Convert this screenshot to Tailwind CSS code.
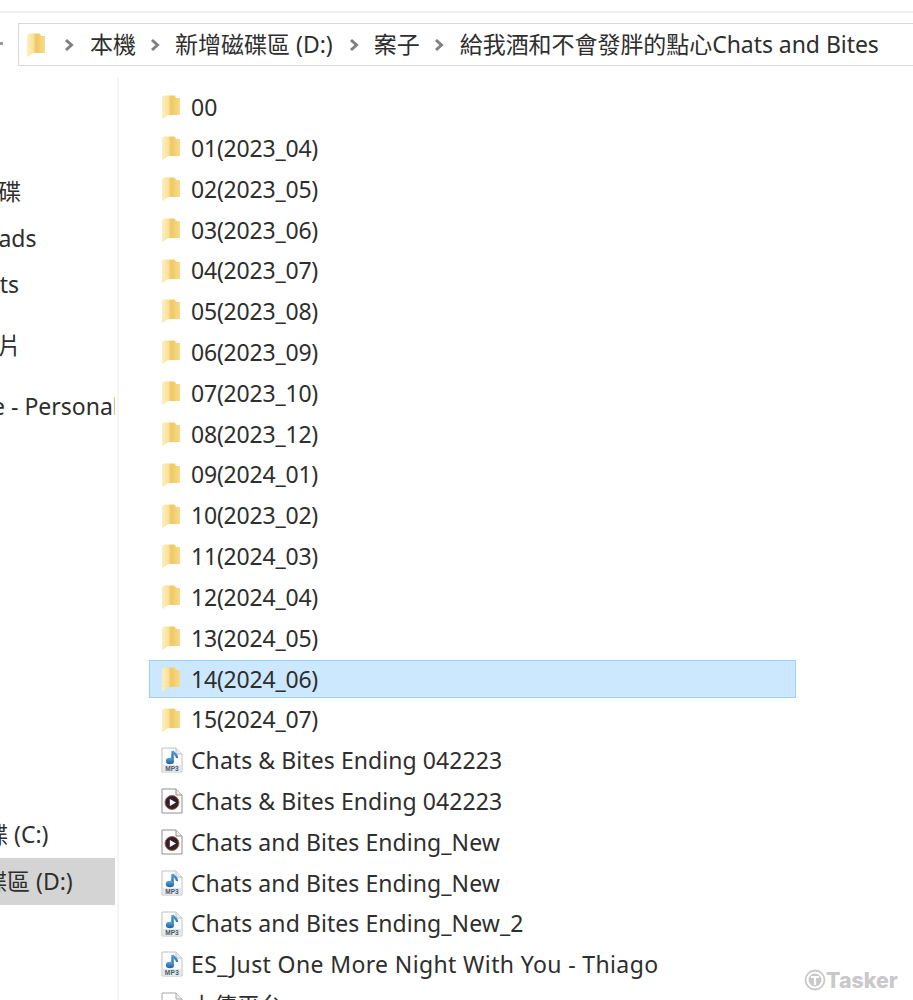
<!DOCTYPE html>
<html lang="zh-Hant">
<head>
<meta charset="UTF-8">
<title>Chats and Bites</title>
<script src="https://cdn.jsdelivr.net/npm/@tailwindcss/browser@4"></script>
</head>
<body class="bg-white h-[1000px] overflow-hidden relative font-['Noto_Sans','Noto_Sans_CJK_TC',sans-serif] text-[#2e2e2e] antialiased">

<svg class="absolute w-0 h-0">
  <defs>
    <linearGradient id="fg" x1="0" x2="1" y1="0" y2="0">
      <stop offset="0" stop-color="#fdf0bf"/>
      <stop offset="0.35" stop-color="#f9e29a"/>
      <stop offset="0.5" stop-color="#efc765"/>
      <stop offset="1" stop-color="#f8dc8a"/>
    </linearGradient>
    <linearGradient id="mg" x1="0" x2="0" y1="0" y2="1">
      <stop offset="0" stop-color="#56a6dd"/>
      <stop offset="1" stop-color="#1f5f9c"/>
    </linearGradient>
  </defs>
  <symbol id="folder" viewBox="0 0 20 26">
    <path d="M1 3 L3 1.5 L14 1.5 L15 4 L19 4 L19 21 L7 21 L2 25 L1 24 Z" fill="url(#fg)"/>
  </symbol>
  <symbol id="mp3" viewBox="0 0 22 26">
    <path d="M1 1 H15 L21 7 V25 H1 Z" fill="#fdfdfd" stroke="#c2c2c2"/>
    <path d="M15 1 V7 H21" fill="#ececec" stroke="#c2c2c2"/>
    <path d="M11.5 4 V13 M11.5 4 C13 7 16.5 7.5 16 11" fill="none" stroke="url(#mg)" stroke-width="2.4"/>
    <ellipse cx="9" cy="14" rx="4.2" ry="3.2" fill="url(#mg)"/>
    <rect x="2" y="18" width="18" height="6.5" fill="#e4e8ec"/>
    <text x="11" y="24" font-size="6.5" font-weight="700" text-anchor="middle" fill="#4c5a66" font-family="Liberation Sans">MP3</text>
  </symbol>
  <symbol id="video" viewBox="0 0 22 26">
    <path d="M1 1 H15 L21 7 V25 H1 Z" fill="#fff" stroke="#8f8f8f"/>
    <path d="M15 1 V7 H21" fill="#eee" stroke="#8f8f8f"/>
    <circle cx="11" cy="14.5" r="7" fill="#33222c" stroke="#a8604e" stroke-width="1"/>
    <path d="M8.8 11 L15 14.5 L8.8 18 Z" fill="#fff"/>
  </symbol>
  <symbol id="doc" viewBox="0 0 22 26">
    <path d="M1 1 H15 L21 7 V25 H1 Z" fill="#fff" stroke="#a8a8a8"/>
    <path d="M15 1 V7 H21" fill="#eee" stroke="#a8a8a8"/>
    <path d="M4 9 H18 M4 13 H18 M4 17 H18" stroke="#c8c8c8"/>
  </symbol>
  <symbol id="chev" viewBox="0 0 10 14">
    <path d="M2 2 L7.5 7 L2 12" fill="none" stroke="#808080" stroke-width="3"/>
  </symbol>
</svg>

<!-- top strip -->
<div class="h-[13px] border-b-2 border-[#efefef]"></div>

<!-- address bar -->
<div class="flex items-center h-[53px] pt-[10px]">
  <span class="w-[3px] h-[3px] mr-[15px] bg-[#999] mt-[-2px]"></span>
  <div class="flex-1 h-[43px] flex items-center border border-r-0 border-[#d9d9d9] text-[23px] whitespace-nowrap pl-[7px]">
    <svg class="w-[20px] h-[28px]"><use href="#folder"/></svg>
    <svg class="w-[10px] h-[14px] ml-[18px]"><use href="#chev"/></svg>
    <span class="ml-[16px]">本機</span>
    <svg class="w-[10px] h-[14px] ml-[14px]"><use href="#chev"/></svg>
    <span class="ml-[15px]">新增磁碟區 (D:)</span>
    <svg class="w-[10px] h-[14px] ml-[16px]"><use href="#chev"/></svg>
    <span class="ml-[15px]">案子</span>
    <svg class="w-[10px] h-[14px] ml-[14px]"><use href="#chev"/></svg>
    <span class="ml-[16px] tracking-[-0.05px]">給我酒和不會發胖的點心Chats and Bites</span>
  </div>
</div>

<div class="flex h-[934px]">
  <!-- nav pane -->
  <aside class="w-[119px] shrink-0 mt-[12px] border-r-2 border-[#f5f5f5] overflow-hidden text-[23px] whitespace-nowrap leading-[46px]">
    <div class="w-[115px] overflow-hidden mt-[90px]">
      <div class="-ml-[71px] h-[47px]">本機磁碟</div>
      <div class="-ml-[84px] h-[46px]">Downloads</div>
      <div class="-ml-[105px] h-[61px]">Documents</div>
      <div class="-ml-[25px] h-[61px]">圖片</div>
      <div class="-ml-[97px] h-[428px]">OneDrive - Personal</div>
      <div class="-ml-[84px] h-[47px]">本機磁碟 (C:)</div>
      <div class="-ml-[85px] h-[47px] bg-[#d4d4d4]">新增磁碟區 (D:)</div>
    </div>
  </aside>

  <!-- file list -->
  <main class="flex-1 pt-[21px] pl-[30px] text-[23px] whitespace-nowrap">
    <div class="w-[647px] flex flex-col">
      <div class="flex items-center h-[40.82px] pl-[12px]"><svg class="w-[20px] h-[26px] mr-[10px]"><use href="#folder"/></svg>00</div>
      <div class="flex items-center h-[40.82px] pl-[12px] tracking-[-0.2px]"><svg class="w-[20px] h-[26px] mr-[10px]"><use href="#folder"/></svg>01(2023_04)</div>
      <div class="flex items-center h-[40.82px] pl-[12px] tracking-[-0.2px]"><svg class="w-[20px] h-[26px] mr-[10px]"><use href="#folder"/></svg>02(2023_05)</div>
      <div class="flex items-center h-[40.82px] pl-[12px] tracking-[-0.2px]"><svg class="w-[20px] h-[26px] mr-[10px]"><use href="#folder"/></svg>03(2023_06)</div>
      <div class="flex items-center h-[40.82px] pl-[12px] tracking-[-0.2px]"><svg class="w-[20px] h-[26px] mr-[10px]"><use href="#folder"/></svg>04(2023_07)</div>
      <div class="flex items-center h-[40.82px] pl-[12px] tracking-[-0.2px]"><svg class="w-[20px] h-[26px] mr-[10px]"><use href="#folder"/></svg>05(2023_08)</div>
      <div class="flex items-center h-[40.82px] pl-[12px] tracking-[-0.2px]"><svg class="w-[20px] h-[26px] mr-[10px]"><use href="#folder"/></svg>06(2023_09)</div>
      <div class="flex items-center h-[40.82px] pl-[12px] tracking-[-0.2px]"><svg class="w-[20px] h-[26px] mr-[10px]"><use href="#folder"/></svg>07(2023_10)</div>
      <div class="flex items-center h-[40.82px] pl-[12px] tracking-[-0.2px]"><svg class="w-[20px] h-[26px] mr-[10px]"><use href="#folder"/></svg>08(2023_12)</div>
      <div class="flex items-center h-[40.82px] pl-[12px] tracking-[-0.2px]"><svg class="w-[20px] h-[26px] mr-[10px]"><use href="#folder"/></svg>09(2024_01)</div>
      <div class="flex items-center h-[40.82px] pl-[12px] tracking-[-0.2px]"><svg class="w-[20px] h-[26px] mr-[10px]"><use href="#folder"/></svg>10(2023_02)</div>
      <div class="flex items-center h-[40.82px] pl-[12px] tracking-[-0.2px]"><svg class="w-[20px] h-[26px] mr-[10px]"><use href="#folder"/></svg>11(2024_03)</div>
      <div class="flex items-center h-[40.82px] pl-[12px] tracking-[-0.2px]"><svg class="w-[20px] h-[26px] mr-[10px]"><use href="#folder"/></svg>12(2024_04)</div>
      <div class="flex items-center h-[40.82px] pl-[12px] tracking-[-0.2px]"><svg class="w-[20px] h-[26px] mr-[10px]"><use href="#folder"/></svg>13(2024_05)</div>
      <div class="flex items-center h-[38px] mt-[1.9px] mb-[0.92px] pl-[11px] tracking-[-0.2px] bg-[#cce8ff] border border-[#99d1ff]"><svg class="w-[20px] h-[26px] mr-[10px]"><use href="#folder"/></svg>14(2024_06)</div>
      <div class="flex items-center h-[40.82px] pl-[12px] tracking-[-0.2px]"><svg class="w-[20px] h-[26px] mr-[10px]"><use href="#folder"/></svg>15(2024_07)</div>
      <div class="flex items-center h-[40.82px] pl-[12px] tracking-[0.07px]"><svg class="w-[22px] h-[26px] mr-[8px]"><use href="#mp3"/></svg>Chats &amp; Bites Ending 042223</div>
      <div class="flex items-center h-[40.82px] pl-[12px] tracking-[0.07px]"><svg class="w-[22px] h-[26px] mr-[8px]"><use href="#video"/></svg>Chats &amp; Bites Ending 042223</div>
      <div class="flex items-center h-[40.82px] pl-[12px] tracking-[0.07px]"><svg class="w-[22px] h-[26px] mr-[8px]"><use href="#video"/></svg>Chats and Bites Ending_New</div>
      <div class="flex items-center h-[40.82px] pl-[12px] tracking-[0.07px]"><svg class="w-[22px] h-[26px] mr-[8px]"><use href="#mp3"/></svg>Chats and Bites Ending_New</div>
      <div class="flex items-center h-[40.82px] pl-[12px] tracking-[0.07px]"><svg class="w-[22px] h-[26px] mr-[8px]"><use href="#mp3"/></svg>Chats and Bites Ending_New_2</div>
      <div class="flex items-center h-[40.82px] pl-[12px] tracking-[0.37px]"><svg class="w-[22px] h-[26px] mr-[8px]"><use href="#mp3"/></svg>ES_Just One More Night With You - Thiago</div>
      <div class="flex items-center h-[40.82px] pl-[12px]"><svg class="w-[22px] h-[26px] mr-[8px]"><use href="#doc"/></svg>上傳平台</div>
    </div>
  </main>
</div>

<!-- watermark -->
<div class="absolute left-[804px] top-[967px] flex items-center text-[#c9c9c9] text-[21.4px] leading-[26px] font-extrabold font-['Inter',sans-serif]">
  <svg class="w-[22px] h-[24px]" viewBox="0 0 22 24"><circle cx="11" cy="12" r="9.5" fill="none" stroke="#c9c9c9" stroke-width="1.8"/><circle cx="11" cy="12" r="6.5" fill="#c9c9c9"/><path d="M7 9 H15 M11 9 V17" stroke="#fff" stroke-width="2.2"/></svg>
  Tasker
</div>
</body>
</html>
